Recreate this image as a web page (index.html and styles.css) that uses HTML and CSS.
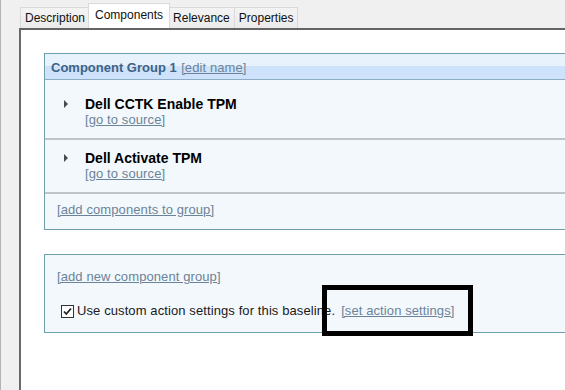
FILE: index.html
```html
<!DOCTYPE html>
<html lang="en">
<head>
    <meta charset="UTF-8">
    <meta name="viewport" content="width=device-width, initial-scale=1.0">
    <title>Baseline - Components</title>
    <link rel="stylesheet" href="styles.css">
</head>
<body>
    <div class="window">
        <div class="tabs">
            <div class="tab">Description</div>
            <div class="tab active">Components</div>
            <div class="tab">Relevance</div>
            <div class="tab">Properties</div>
        </div>

        <div class="panel">
            <div class="group">
                <div class="group-head">
                    <span class="group-title">Component Group 1</span>
                    <a href="#" class="link">[edit name]</a>
                </div>
                <ul class="items">
                    <li class="item">
                        <span class="arrow"></span>
                        <div class="item-body">
                            <div class="item-title">Dell CCTK Enable TPM</div>
                            <a href="#" class="link">[go to source]</a>
                        </div>
                    </li>
                    <li class="item">
                        <span class="arrow"></span>
                        <div class="item-body">
                            <div class="item-title">Dell Activate TPM</div>
                            <a href="#" class="link">[go to source]</a>
                        </div>
                    </li>
                </ul>
                <div class="group-foot">
                    <a href="#" class="link">[add components to group]</a>
                </div>
            </div>

            <div class="group group-actions">
                <a href="#" class="link">[add new component group]</a>
                <div class="custom">
                    <span class="check">
                        <svg width="11" height="11" viewBox="0 0 11 11"><path d="M2 5.5 L4.3 8 L9 2.5" fill="none" stroke="#222" stroke-width="1.8"/></svg>
                    </span>
                    <span class="custom-text">Use custom action settings for this baseline.</span>
                    <a href="#" class="link">[set action settings]</a>
                </div>
            </div>
        </div>

        <!-- annotation drawn over the screenshot -->
        <div class="highlight"></div>
    </div>
</body>
</html>
```

FILE: styles.css
```css
/* Basic reset */
* {
    margin: 0;
    padding: 0;
    box-sizing: border-box;
}

body {
    font-family: 'Liberation Sans', Arial, sans-serif;
    background: #f0f0f0;
    color: #1a1a1a;
    overflow: hidden;
}

.window {
    position: relative;
    height: 100vh;
    display: flex;
    flex-direction: column;
    border-left: 1px solid #b4b4b4;
}

/* Tabs */
.tabs {
    display: flex;
    align-items: flex-end;
    height: 28px;
    padding-left: 19px;
}

.tab {
    height: 21px;
    padding: 2px 4px 0;
    font-size: 12px;
    line-height: 16px;
    color: #111;
    background: linear-gradient(#f3f3f3, #ebebeb);
    border: 1px solid #d9d9d9;
    border-bottom: none;
    text-align: center;
}

.tab + .tab {
    border-left: none;
}

.tab.active {
    position: relative;
    z-index: 1;
    height: 25px;
    padding: 3px 6px 0;
    margin: 0 -2px;
    background: #fff;
    border-left: 1px solid #d9d9d9;
}

.tab.active + .tab {
    border-left: 1px solid #d9d9d9;
}

/* Content panel */
.panel {
    flex: 1;
    margin-left: 18px;
    padding: 23px 0 0 23px;
    overflow: hidden;
    background: #fff;
    border-top: 2px solid #646464;
    border-left: 2px solid #6a6a6a;
}

.link {
    font-size: 13px;
    line-height: 16px;
    letter-spacing: 0.1px;
    color: #6b8398;
    text-decoration: underline;
}

.group {
    margin-right: -40px;
    margin-bottom: 24px;
    background: #f3f8fd;
    border: 1px solid #6f9fab;
}

.group-head {
    height: 26px;
    padding: 0 6px;
    line-height: 25px;
    background: linear-gradient(#e7f2fc 50%, #cee3fb 50%);
    border-bottom: 1px solid #8eacc5;
}

.group-title {
    font-size: 13px;
    font-weight: bold;
    color: #3e6283;
}

.items {
    list-style: none;
    padding-top: 6px;
}

.item {
    display: flex;
    align-items: flex-start;
    padding: 10px 0 10px 19px;
    border-bottom: 2px solid #c1c4c7;
}

.arrow {
    width: 0;
    height: 0;
    margin: 4px 17px 0 0;
    border-left: 4px solid #4a4a4a;
    border-top: 4px solid transparent;
    border-bottom: 4px solid transparent;
}

.item-body {
    display: flex;
    flex-direction: column;
    align-items: flex-start;
}

.item-title {
    font-size: 14px;
    font-weight: bold;
    line-height: 16px;
    color: #000;
}

.group-foot {
    padding: 7px 12px 11px;
    line-height: 16px;
}

.group-actions {
    padding: 13px 12px 13px;
    line-height: 16px;
}

.custom {
    display: flex;
    align-items: center;
    margin: 18px 0 0 4px;
    font-size: 13px;
    line-height: 16px;
}

.check {
    display: flex;
    align-items: center;
    justify-content: center;
    width: 13px;
    height: 13px;
    margin-right: 3px;
    background: #fff;
    border: 1px solid #333;
}

.custom-text {
    margin-right: 6px;
    letter-spacing: 0.1px;
}

/* Black annotation box */
.highlight {
    position: absolute;
    left: 321px;
    top: 285px;
    width: 151px;
    height: 51px;
    border: 5px solid #000;
}
```
